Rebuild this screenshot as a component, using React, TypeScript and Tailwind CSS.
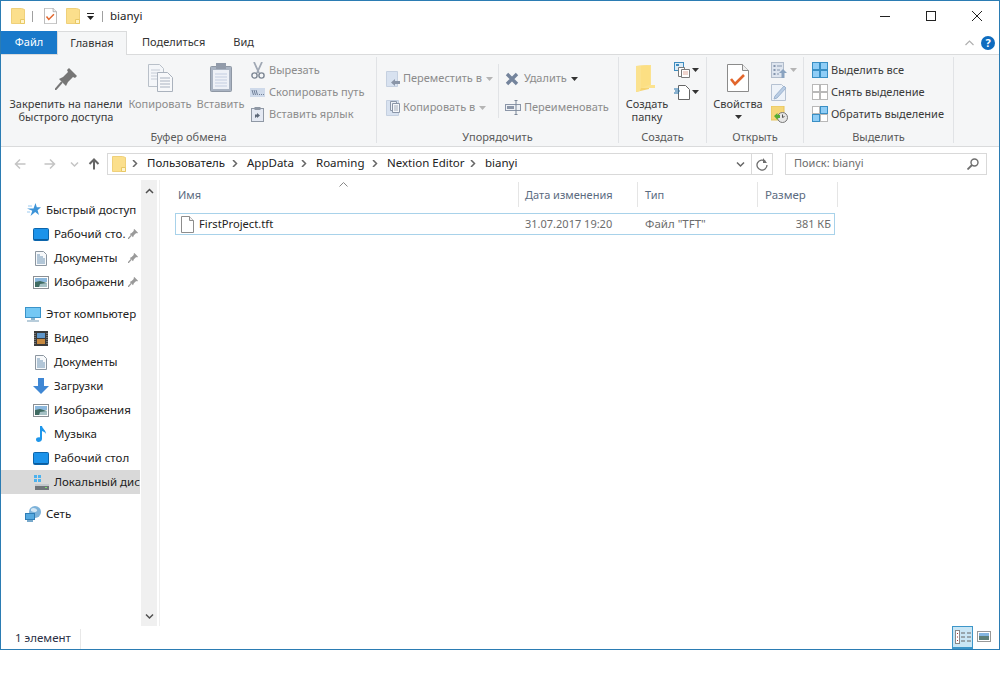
import type { ReactNode } from 'react';

const Folder = ({ className = '' }: { className?: string }) => (
  <svg width="14" height="16" viewBox="0 0 14 16" className={className}>
    <path d="M.5.5h10l3 1v14H.5z" fill="#fbdf8c" stroke="#efd07a" />
    <path d="M9.5 11.5h4v4h-4z" fill="#fff3c9" stroke="#e8c864" />
  </svg>
);

const Caret = ({ color = '#333' }: { color?: string }) => (
  <svg width="7" height="4" viewBox="0 0 7 4" className="shrink-0">
    <path d="M0 0h7L3.5 4z" fill={color} />
  </svg>
);

const CheckDoc = ({ w = 13, h = 16 }: { w?: number; h?: number }) => (
  <svg width={w} height={h} viewBox="0 0 22 28">
    <path d="M.5.5h15l6 6v21H.5z" fill="#fff" stroke="#8b8b8b" />
    <path d="M15.5.5v6h6" fill="#eee" stroke="#8b8b8b" />
    <path d="M4 15l4 5 9-9" fill="none" stroke="#e2662c" strokeWidth="2.6" />
  </svg>
);

const PinLarge = () => (
  <svg width="22" height="22" viewBox="0 0 22 22" className="mb-[2px]">
    <path d="M0 22l7-8" stroke="#777" strokeWidth="2" />
    <path d="M4 11l4-2 5-5-1-2 2-2 8 8-2 2-2-1-5 5-2 4z" fill="#767676" />
  </svg>
);

const CopyLarge = () => (
  <svg width="25" height="28" viewBox="0 0 25 28">
    <path d="M.5.5h11l4 4v18H.5z" fill="#f4f6f9" stroke="#b9c0c9" />
    <path d="M3 6h9M3 9h9M3 12h9M3 15h9" stroke="#c6ccd6" />
    <path d="M9.5 8.5h10l5 5v14h-15z" fill="#f7f8fa" stroke="#aab2bd" />
    <path d="M12 14h10M12 17h10M12 20h10M12 23h10" stroke="#a9b2c0" />
  </svg>
);

const PasteLarge = () => (
  <svg width="22" height="29" viewBox="0 0 22 29">
    <rect x=".5" y="3.5" width="21" height="25" rx="1" fill="#a9b3c2" stroke="#8f98a5" />
    <rect x="3" y="7" width="16" height="19" fill="#eef1f7" />
    <path d="M5 11h12M5 14h12M5 17h12M5 20h12M5 23h12" stroke="#c3cde0" />
    <rect x="6" y="0" width="10" height="6" fill="#929baa" />
  </svg>
);

const Scissors = () => (
  <svg width="14" height="17" viewBox="0 0 14 17" className="ml-px">
    <path d="M3 0l5 11M11 0L6 11" stroke="#a0a8b4" strokeWidth="1.8" fill="none" />
    <circle cx="3.5" cy="13.5" r="2.6" fill="none" stroke="#7d8794" strokeWidth="1.4" />
    <circle cx="10.5" cy="13.5" r="2.6" fill="none" stroke="#7d8794" strokeWidth="1.4" />
  </svg>
);

const PathIcon = () => (
  <svg width="15" height="9" viewBox="0 0 15 9">
    <rect width="15" height="9" fill="#cfdaea" />
    <path d="M2 2l1.5 5M4 2l1.5 5M6 2l1.5 5" stroke="#6f7f98" />
    <path d="M9 6.5h1M11 6.5h1M13 6.5h1" stroke="#6f7f98" />
  </svg>
);

const ShortcutIcon = () => (
  <svg width="13" height="15" viewBox="0 0 13 15" className="ml-px">
    <rect x=".5" y="1.5" width="12" height="13" fill="#e4e9f3" stroke="#8f98a5" />
    <rect x="3.5" y="0" width="6" height="3" fill="#8f98a5" />
    <path d="M4 11V7.5h2V6l3 2.5L6 11V9.5z" fill="#5b6778" />
  </svg>
);

const MoveIcon = () => (
  <svg width="14" height="16" viewBox="0 0 14 16">
    <path d="M.5.5h11v15H.5z" fill="#d8e2f0" stroke="#c5d0e0" />
    <path d="M14 10H9V8l-4 3.5L9 15v-2h5z" fill="#8b96a8" />
  </svg>
);

const CopyToIcon = () => (
  <svg width="14" height="16" viewBox="0 0 14 16">
    <path d="M.5.5h12v15H.5z" fill="#d8e2f0" stroke="#c5d0e0" />
    <path d="M4.5 1.5h6v9h-6z" fill="#eef2f7" stroke="#8b96a8" />
    <path d="M6.5 3.5h7v9h-7z" fill="#f5f7fa" stroke="#8b96a8" />
    <path d="M8 6h4M8 8h4M8 10h4" stroke="#a5aebc" />
  </svg>
);

const DeleteIcon = () => (
  <svg width="14" height="14" viewBox="0 0 14 14">
    <path d="M2 2l10 10M12 2L2 12" stroke="#74849c" strokeWidth="3.4" />
  </svg>
);

const RenameIcon = () => (
  <svg width="16" height="15" viewBox="0 0 16 15">
    <rect x=".5" y="4.5" width="15" height="6" fill="#eef1f5" stroke="#8b96a8" />
    <rect x="2" y="6" width="7" height="3" fill="#8b96a8" />
    <path d="M11 1v13M9.5.5h3M9.5 14.5h3" stroke="#7b8798" fill="none" />
  </svg>
);

const FolderLarge = () => (
  <svg width="19" height="27" viewBox="0 0 19 27" className="mr-[3px]">
    <path d="M0 1l13-1v24L0 27z" fill="#f6d36f" />
    <path d="M13 0h2v20h4v3H5l-1 3-4 1V1z" fill="#fbe28f" />
    <path d="M5 1h9v19h-1l-8 3z" fill="#fcdf83" />
  </svg>
);

const NewItemIcon = () => (
  <svg width="16" height="16" viewBox="0 0 16 16">
    <rect x=".5" y=".5" width="9" height="8" fill="#dcecf7" stroke="#3e8cbf" />
    <rect x="2" y="2" width="3" height="2" fill="#3e8cbf" />
    <path d="M4.5 5.5h6v9h-6z" fill="#fff" stroke="#7a7a7a" />
    <path d="M7.5 7.5h8v8h-8z" fill="#fff" stroke="#7a7a7a" />
    <path d="M9 10h5M9 12h5" stroke="#e0a99c" />
  </svg>
);

const EasyAccessIcon = () => (
  <svg width="16" height="15" viewBox="0 0 16 15">
    <path d="M4.5.5h7l4 4v10h-11z" fill="#fff" stroke="#666" />
    <path d="M0 4h5M1 6h5M0 8h5" stroke="#1f6fa8" strokeWidth="1" />
  </svg>
);

const OpenListIcon = () => (
  <svg width="16" height="16" viewBox="0 0 16 16">
    <rect x=".5" y=".5" width="12" height="15" fill="#dee5ef" stroke="#b1bccb" />
    <path d="M2.5 3h2v2h-2zM2.5 7h2v2h-2zM2.5 11h2v2h-2z" fill="#8596ae" />
    <path d="M6 4h5M6 8h3M6 12h2" stroke="#8596ae" />
    <path d="M12 7l4 4h-2.500v5h-3v-5H8z" fill="#8aa3c0" />
  </svg>
);

const EditDocIcon = () => (
  <svg width="16" height="17" viewBox="0 0 16 17">
    <path d="M.5.5h10l4 4v12H.5z" fill="#eef3f9" stroke="#b6c2d2" />
    <path d="M3 15l1-3 9-10 2 2-9 10z" fill="#b9cde4" stroke="#9db4d0" />
  </svg>
);

const HistoryIcon = () => (
  <svg width="17" height="17" viewBox="0 0 17 17">
    <rect width="13" height="14" fill="#f5d779" stroke="#e5c35e" />
    <circle cx="11.500" cy="11.500" r="5" fill="#e6e6e6" stroke="#777" />
    <path d="M11.500 8.500v3l2-1" fill="none" stroke="#555" />
    <path d="M3 10l3.500-3v2h2.500v3H6.500v2z" fill="#53ad35" />
  </svg>
);

const SelectGrid = ({ fills, stroke }: { fills: string[]; stroke: string[] }) => (
  <svg width="16" height="16" viewBox="0 0 16 16">
    {[
      [0.5, 0.5],
      [8.5, 0.5],
      [0.5, 8.5],
      [8.5, 8.5],
    ].map(([x, y], i) => (
      <rect key={i} x={x} y={y} width="7" height="7" fill={fills[i]} stroke={stroke[i]} />
    ))}
  </svg>
);

const Star = () => (
  <svg width="14" height="14" viewBox="0 0 14 14" className="ml-[2px]">
    <path d="M8.500 0l1.300 4.300H14l-3.400 2.900L12 12 8.200 9 3.500 13l1.800-5.200L0 5.500h6.500z" fill="#3d94d8" />
    <path d="M1 3h4M0 9h3" stroke="#9bcaf0" />
  </svg>
);

const Desktop = () => (
  <svg width="16" height="13" viewBox="0 0 16 13">
    <rect x=".5" y=".5" width="15" height="12" rx="1" fill="#1c93ea" stroke="#0c65ab" />
    <path d="M1 11.500h14" stroke="#0b5c9d" />
  </svg>
);

const Docs = () => (
  <svg width="12" height="15" viewBox="0 0 12 15">
    <path d="M.5.5h8l3 3v11H.5z" fill="#f7f9fb" stroke="#8c96a0" />
    <path d="M2 4h3M2 6h6M2 8h8M2 10h8M2 12h8" stroke="#6f94b4" />
  </svg>
);

const Pictures = () => (
  <svg width="16" height="13" viewBox="0 0 16 13">
    <rect x=".5" y=".5" width="15" height="12" fill="#fff" stroke="#8a8f94" />
    <rect x="2" y="2" width="12" height="4" fill="#8cb8dd" />
    <path d="M2 6l5-1 7 2v4H2z" fill="#3f6b62" />
    <path d="M7 8l7-1v4H6z" fill="#a6c1c5" />
  </svg>
);

const Computer = () => (
  <svg width="16" height="15" viewBox="0 0 16 15">
    <rect x=".5" y=".5" width="15" height="10" fill="#74c8f4" stroke="#3a93c9" />
    <path d="M6 11h4v2H6z" fill="#8ab4cd" />
    <path d="M2 14h12" stroke="#a0bdcf" strokeWidth="1.500" />
  </svg>
);

const Video = () => (
  <svg width="14" height="15" viewBox="0 0 14 15">
    <rect width="14" height="15" fill="#3a3a3a" />
    <rect x="3" y="2" width="8" height="5" fill="#5f96c9" />
    <rect x="3" y="8" width="8" height="5" fill="#c7893f" />
    <path d="M1 2v11M13 2v11" stroke="#aaa" strokeDasharray="1 1" />
  </svg>
);

const Download = () => (
  <svg width="16" height="16" viewBox="0 0 16 16">
    <path d="M5 0h6v8h5l-8 8-8-8h5z" fill="#3f87d4" />
  </svg>
);

const Music = () => (
  <svg width="11" height="16" viewBox="0 0 11 16">
    <path d="M4 0h2c.5 3 4 4 4 8-1-2-2.500-2.500-4-3v8c0 2-2 3-3.500 3S0 15 0 13.500 2 11 4 11.500z" fill="#1e96ea" />
  </svg>
);

const Disk = () => (
  <svg width="15" height="15" viewBox="0 0 15 15">
    <path d="M0 0h3v3H0zM4 0h3v3H4zM0 4h3v3H0zM4 4h3v3H4z" fill="#4db2ee" />
    <rect x="1" y="9" width="14" height="6" fill="#6f7479" />
    <rect x="1" y="9" width="14" height="2" fill="#c4c8cc" />
    <rect x="11" y="12" width="2" height="1" fill="#7ee06a" />
  </svg>
);

const Network = () => (
  <svg width="16" height="16" viewBox="0 0 16 16">
    <circle cx="10" cy="6" r="6" fill="#7db2d9" />
    <path d="M6 3c2-2 5-1 6 1s-3 3-6 1z" fill="#d5e7f4" />
    <rect x=".5" y="7.500" width="9" height="6" fill="#54a9e0" stroke="#2f7db5" />
    <path d="M2 15h6" stroke="#4b8cba" strokeWidth="1.500" />
  </svg>
);

const SidebarPin = () => (
  <svg width="10" height="10" viewBox="0 0 22 22">
    <path d="M0 22l7-8" stroke="#999" strokeWidth="3" />
    <path d="M4 11l4-2 5-5-1-2 2-2 8 8-2 2-2-1-5 5-2 4z" fill="#9a9a9a" />
  </svg>
);

const FileIcon = () => (
  <svg width="13" height="17" viewBox="0 0 13 17">
    <path d="M.5.5h8l4 4v12H.5z" fill="#fff" stroke="#8d8d8d" />
    <path d="M8.500.5v4h4" fill="#f0f0f0" stroke="#8d8d8d" />
  </svg>
);

const Chev = ({ color = '#777', dir = 'down' }: { color?: string; dir?: 'down' | 'up' | 'right' }) => {
  const d = dir === 'down' ? 'M1 1.500l3.500 3.500L8 1.500' : dir === 'up' ? 'M1 5l3.500-3.500L8 5' : 'M2 0l3.500 3.500L2 7';
  return (
    <svg width="9" height="7" viewBox="0 0 9 7" className="shrink-0">
      <path d={d} fill="none" stroke={color} strokeWidth="1.500" />
    </svg>
  );
};

const Arrow = ({ color, flip = false, width = 1.5 }: { color: string; flip?: boolean; width?: number }) => (
  <svg width="12" height="12" viewBox="0 0 12 12" className={flip ? 'rotate-180' : ''}>
    <path d="M11.500 6H1.500M6 1.500L1.500 6 6 10.500" fill="none" stroke={color} strokeWidth={width} />
  </svg>
);

function LargeButton({ icon, label, width, disabled, extra }: { icon: ReactNode; label: ReactNode; width: string; disabled?: boolean; extra?: ReactNode }) {
  return (
    <div className={`${width} shrink-0 flex flex-col items-center text-center leading-[13px] ${disabled ? 'text-[#8c8c8c]' : 'text-[#3a3a3a]'}`}>
      <div className="h-[40px] pb-[5px] flex items-end justify-center">{icon}</div>
      <div className="whitespace-nowrap">{label}</div>
      {extra}
    </div>
  );
}

function SmallRow({ icon, label, disabled, height = 'h-[22px]', iconBox = 'w-[19px]', caret }: { icon: ReactNode; label?: string; disabled?: boolean; height?: string; iconBox?: string; caret?: ReactNode }) {
  return (
    <div className={`${height} flex items-center whitespace-nowrap ${disabled ? 'text-[#8c8c8c]' : 'text-[#3a3a3a]'}`}>
      <div className={`${iconBox} flex items-center justify-start shrink-0`}>{icon}</div>
      {label}
      {caret && <span className="ml-[4px] mt-px">{caret}</span>}
    </div>
  );
}

function Group({ width, label, children }: { width: string; label: string; children: ReactNode }) {
  return (
    <div className={`${width} shrink-0 h-[86px] flex flex-col border-r border-[#e1e3e6]`}>
      <div className="h-[73px] flex">{children}</div>
      <div className="h-[13px] leading-[13px] text-center text-[#5a5a5a]">{label}</div>
    </div>
  );
}

function Ribbon() {
  return (
    <div className="h-[93px] shrink-0 bg-[#f5f6f7] border-y border-[#dadbdc] py-[2px] flex text-[11px]">
      <Group width="w-[376px]" label="Буфер обмена">
        <LargeButton
          width="w-[126px] ml-[2px]"
          icon={<PinLarge />}
          label={
            <>
              Закрепить на панели
              <br />
              быстрого доступа
            </>
          }
        />
        <LargeButton width="w-[62px]" disabled icon={<CopyLarge />} label="Копировать" />
        <LargeButton width="w-[59px]" disabled icon={<PasteLarge />} label="Вставить" />
        <div className="pt-[2px]">
          <SmallRow disabled icon={<Scissors />} label="Вырезать" />
          <SmallRow disabled icon={<PathIcon />} label="Скопировать путь" />
          <SmallRow disabled icon={<ShortcutIcon />} label="Вставить ярлык" />
        </div>
      </Group>
      <Group width="w-[242px]" label="Упорядочить">
        <div className="w-[112px] ml-[9px] pt-[7px] shrink-0">
          <SmallRow disabled height="h-[29px]" iconBox="w-[17px]" icon={<MoveIcon />} label="Переместить в" caret={<Caret color="#b5b5b5" />} />
          <SmallRow disabled height="h-[29px]" iconBox="w-[17px]" icon={<CopyToIcon />} label="Копировать в" caret={<Caret color="#b5b5b5" />} />
        </div>
        <div className="w-px h-[54px] mt-[7px] bg-[#e1e3e6]" />
        <div className="pl-[6px] pt-[7px]">
          <SmallRow height="h-[29px]" iconBox="w-[19px]" disabled icon={<DeleteIcon />} label="Удалить" caret={<Caret />} />
          <SmallRow height="h-[29px]" iconBox="w-[19px]" disabled icon={<RenameIcon />} label="Переименовать" />
        </div>
      </Group>
      <Group width="w-[88px]" label="Создать">
        <LargeButton
          width="w-[56px] -mr-px"
          icon={<FolderLarge />}
          label={
            <>
              Создать
              <br />
              папку
            </>
          }
        />
        <div className="pt-[2px]">
          <div className="h-[22px] flex items-center gap-[2px]">
            <NewItemIcon />
            <Caret />
          </div>
          <div className="h-[22px] flex items-center gap-[2px]">
            <EasyAccessIcon />
            <Caret />
          </div>
        </div>
      </Group>
      <Group width="w-[97px]" label="Открыть">
        <LargeButton
          width="w-[62px]"
          icon={<CheckDoc w={22} h={28} />}
          label="Свойства"
          extra={
            <div className="mt-[5px]">
              <Caret />
            </div>
          }
        />
        <div className="pl-[2px] pt-[2px]">
          <div className="h-[22px] flex items-center gap-[3px]">
            <OpenListIcon />
            <Caret color="#b5b5b5" />
          </div>
          <div className="h-[22px] flex items-center">
            <EditDocIcon />
          </div>
          <div className="h-[22px] flex items-center">
            <HistoryIcon />
          </div>
        </div>
      </Group>
      <Group width="w-[150px]" label="Выделить">
        <div className="pl-[8px] pt-[2px]">
          <SmallRow
            icon={<SelectGrid fills={['#8fcdf6', '#8fcdf6', '#8fcdf6', '#8fcdf6']} stroke={['#3a8fc4', '#3a8fc4', '#3a8fc4', '#3a8fc4']} />}
            label="Выделить все"
          />
          <SmallRow
            icon={<SelectGrid fills={['#fff', '#fff', '#fff', '#fff']} stroke={['#b8b8b8', '#b8b8b8', '#b8b8b8', '#b8b8b8']} />}
            label="Снять выделение"
          />
          <SmallRow
            icon={<SelectGrid fills={['#fff', '#8fcdf6', '#8fcdf6', '#fff']} stroke={['#b8b8b8', '#3a8fc4', '#3a8fc4', '#b8b8b8']} />}
            label="Обратить выделение"
          />
        </div>
      </Group>
    </div>
  );
}

const crumbs = [
  { label: 'Пользователь', w: 'w-[81px]' },
  { label: 'AppData', w: 'w-[50px]' },
  { label: 'Roaming', w: 'w-[52px]' },
  { label: 'Nextion Editor', w: 'w-[79px]' },
  { label: 'bianyi', w: 'w-[40px]' },
];

function NavBar() {
  return (
    <div className="h-[33px] shrink-0 flex pt-[6px] text-[11.5px]">
      <div className="w-[106px] h-[22px] shrink-0 flex items-center pl-[13px]">
        <Arrow color="#c4c4c4" />
        <div className="ml-[18px]">
          <Arrow color="#c4c4c4" flip />
        </div>
        <div className="ml-[14px]">
          <Chev color="#c4c4c4" />
        </div>
        <div className="ml-[9px] rotate-90">
          <Arrow color="#666" width={2} />
        </div>
      </div>
      <div className="w-[666px] h-[22px] shrink-0 flex items-center border border-[#d9d9d9]">
        <Folder className="ml-[4px] shrink-0" />
        <div className="w-[2px] shrink-0" />
        <div className="flex items-center flex-1 text-[#222] pb-[2px]">
          {crumbs.map((c) => (
            <div key={c.label} className="flex items-center">
              <div className="w-[19px] pl-[3px] shrink-0">
                <Chev dir="right" color="#666" />
              </div>
              <div className={`${c.w} whitespace-nowrap shrink-0`}>{c.label}</div>
            </div>
          ))}
        </div>
        <div className="w-[21px] flex justify-center">
          <Chev color="#666" />
        </div>
        <div className="w-[21px] h-full border-l border-[#d9d9d9] flex items-center justify-center">
          <svg width="12" height="13" viewBox="0 0 12 13">
            <path d="M9.500 3.500A5 5 0 1 0 11 7" fill="none" stroke="#6e6e6e" strokeWidth="1.300" />
            <path d="M7 0v5h4z" fill="#6e6e6e" />
          </svg>
        </div>
      </div>
      <div className="ml-[12px] w-[202px] h-[22px] shrink-0 flex items-center justify-between border border-[#d9d9d9] pl-[8px] pr-[7px] text-[11px] text-[#6d6d6d]">
        <span className="pb-[2px]">Поиск: bianyi</span>
        <svg width="12" height="12" viewBox="0 0 12 12">
          <circle cx="7.500" cy="4.500" r="3.500" fill="none" stroke="#6e6e6e" strokeWidth="1.400" />
          <path d="M5 7l-4.500 4.500" stroke="#6e6e6e" strokeWidth="1.800" />
        </svg>
      </div>
    </div>
  );
}

type NavItem = { icon: ReactNode; label: string; sub?: boolean; pin?: boolean; selected?: boolean };

const navGroups: NavItem[][] = [
  [
    { icon: <Star />, label: 'Быстрый доступ' },
    { icon: <Desktop />, label: 'Рабочий сто.', sub: true, pin: true },
    { icon: <Docs />, label: 'Документы', sub: true, pin: true },
    { icon: <Pictures />, label: 'Изображени', sub: true, pin: true },
  ],
  [
    { icon: <Computer />, label: 'Этот компьютер' },
    { icon: <Video />, label: 'Видео', sub: true },
    { icon: <Docs />, label: 'Документы', sub: true },
    { icon: <Download />, label: 'Загрузки', sub: true },
    { icon: <Pictures />, label: 'Изображения', sub: true },
    { icon: <Music />, label: 'Музыка', sub: true },
    { icon: <Desktop />, label: 'Рабочий стол', sub: true },
    { icon: <Disk />, label: 'Локальный дис', sub: true, selected: true },
  ],
  [{ icon: <Network />, label: 'Сеть' }],
];

function Sidebar() {
  return (
    <div className="w-[140px] shrink-0 pt-[18px] flex flex-col gap-[8px] text-[11.5px] text-[#222]">
      {navGroups.map((group, i) => (
        <div key={i}>
          {group.map((item) => (
            <div key={item.label} className={`h-[24px] flex items-center whitespace-nowrap ${item.selected ? 'bg-[#d9d9d9] mr-px' : ''} ${item.sub ? 'pl-[32px]' : 'pl-[24px]'}`}>
              <div className="w-[16px] mr-[5px] flex items-center justify-center shrink-0">{item.icon}</div>
              <span className="pb-px">{item.label}</span>
              {item.pin && (
                <span className="ml-auto mr-[3px] shrink-0 pl-[1px]">
                  <SidebarPin />
                </span>
              )}
            </div>
          ))}
        </div>
      ))}
    </div>
  );
}

function FileList() {
  return (
    <div className="flex-1 relative border-l border-[#efefef] ml-[2px] pl-[12px] pt-[2px] text-[11px]">
      <svg width="9" height="5" viewBox="0 0 9 5" className="absolute left-[179px] top-[2px]">
        <path d="M.5 4.500l4-4 4 4" fill="none" stroke="#888" />
      </svg>
      <div className="flex h-[25px] leading-[25px] text-[#5b6b7f]">
        <div className="w-[347px] pl-[6px] border-r border-[#e5e5e5]">Имя</div>
        <div className="w-[119px] pl-[6px] border-r border-[#e5e5e5]">Дата изменения</div>
        <div className="w-[120px] pl-[7px] border-r border-[#e5e5e5]">Тип</div>
        <div className="w-[80px] pl-[7px] border-r border-[#e5e5e5] text-[11.5px]">Размер</div>
      </div>
      <div className="mt-[6px] ml-[3px] w-[660px] h-[22px] flex items-center border border-[#a8d2ea] text-[#6d6d6d]">
        <div className="w-[343px] flex items-center pl-[5px] text-[#222] text-[11.2px] gap-[5px]">
          <FileIcon />
          FirstProject.tft
        </div>
        <div className="w-[119px] pl-[6px]">31.07.2017 19:20</div>
        <div className="w-[120px] pl-[7px] text-[11.5px]">Файл &quot;TFT&quot;</div>
        <div className="flex-1 text-right pr-[3px]">381 КБ</div>
      </div>
    </div>
  );
}

export default function App() {
  return (
    <div className="w-[1000px] h-[685px] bg-white font-['Noto_Sans',sans-serif]">
      <div className="h-[650px] border border-[#2b7cb3] flex flex-col">
        {/* Title bar */}
        <div className="h-[30px] shrink-0 flex items-center text-[11.5px] text-[#222]">
          <Folder className="ml-[10px]" />
          <div className="w-px h-[11px] bg-[#a0a0a0] ml-[7px]" />
          <div className="ml-[11px]">
            <CheckDoc />
          </div>
          <Folder className="ml-[9px]" />
          <svg width="7" height="7" viewBox="0 0 7 7" className="ml-[7px] mt-[1px]">
            <path d="M0 0h7v1H0zM0 3h7L3.500 7z" fill="#222" />
          </svg>
          <div className="w-px h-[11px] bg-[#a0a0a0] ml-[8px]" />
          <div className="ml-[7px]">bianyi</div>
          <div className="ml-auto flex items-center">
            <div className="w-[46px] flex justify-center">
              <div className="w-[10px] h-px bg-[#222]" />
            </div>
            <div className="w-[46px] flex justify-center">
              <div className="w-[10px] h-[10px] border border-[#222]" />
            </div>
            <div className="w-[46px] flex justify-center mr-[-1px]">
              <svg width="10" height="10" viewBox="0 0 10 10">
                <path d="M0 0l10 10M10 0L0 10" stroke="#222" />
              </svg>
            </div>
          </div>
        </div>
        {/* Tabs */}
        <div className="h-[23px] shrink-0 flex items-stretch text-[11px] text-[#333]">
          <div className="w-[56px] bg-[#1979ca] text-white flex items-center justify-center">Файл</div>
          <div className="w-[70px] -mb-px relative z-10 bg-[#f5f6f7] border-x border-t border-[#dadbdc] flex items-center justify-center">
            <span className="pb-px">Главная</span>
          </div>
          <div className="ml-[15px] flex items-center">Поделиться</div>
          <div className="ml-[28px] flex items-center">Вид</div>
          <div className="ml-auto flex items-center pr-[4px] gap-[7px]">
            <svg width="9" height="6" viewBox="0 0 9 6">
              <path d="M.5 5l4-4 4 4" fill="none" stroke="#b0b0b0" strokeWidth="1.200" />
            </svg>
            <div className="w-[14px] h-[14px] rounded-full bg-[#0f6cbf] text-white font-bold text-[11px] leading-[14px] text-center">?</div>
          </div>
        </div>
        <Ribbon />
        <NavBar />
        {/* Main */}
        <div className="flex-1 min-h-0 flex pb-[2px]">
          <Sidebar />
          <div className="w-[16px] shrink-0 bg-[#f0f0f0] flex flex-col items-center justify-between pt-[8px] pb-[6px]">
            <Chev color="#505050" dir="up" />
            <Chev color="#505050" />
          </div>
          <FileList />
        </div>
        {/* Status bar */}
        <div className="h-[21px] shrink-0 flex items-center text-[11.5px] text-[#2a2f45] pl-[14px]">
          <div className="w-[66px] border-r border-[#e8e8e8] leading-[18px] pb-[2px]">1 элемент</div>
          <div className="ml-auto flex items-start h-full pr-[8px]">
            <div className="w-[21px] h-[23px] -mt-[2px] bg-[#c9e6f5] border border-[#3d96c9] border-b-[2px] flex items-center justify-center">
              <svg width="16" height="14" viewBox="0 0 16 14">
                <rect x=".5" y=".5" width="4" height="13" fill="#fff" stroke="#888" />
                <path d="M2 3h1v1H2zM2 6.500h1v1H2zM2 10h1v1H2z" fill="#a33" />
                <path d="M6 3h4M12 3h4M6 7h4M12 7h4M6 11h4M12 11h4" stroke="#666" />
              </svg>
            </div>
            <div className="ml-[4px] mt-[3px]">
              <svg width="14" height="11" viewBox="0 0 14 11">
                <rect x=".5" y=".5" width="13" height="10" fill="#fff" stroke="#999" />
                <rect x="2" y="2" width="10" height="3" fill="#84b5e0" />
                <rect x="2" y="5" width="10" height="4" fill="#5e7f78" />
              </svg>
            </div>
          </div>
        </div>
      </div>
    </div>
  );
}
